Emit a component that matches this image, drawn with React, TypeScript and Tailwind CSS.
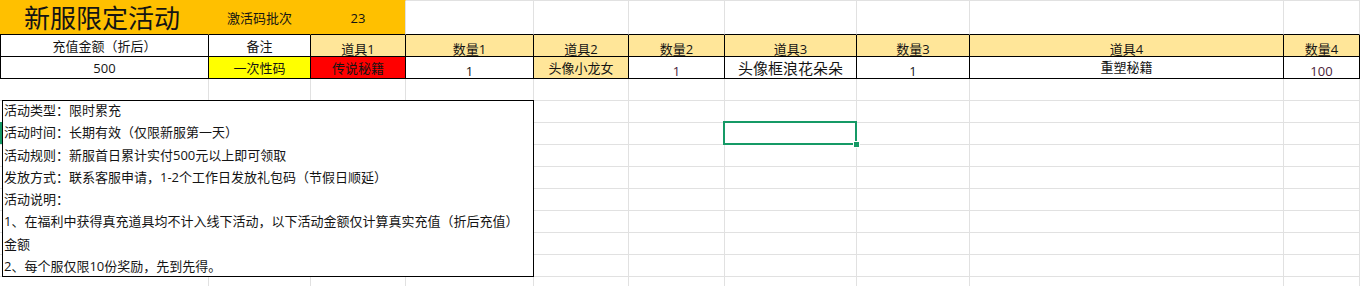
import * as React from "react"

// column widths, each including its 1px right gridline
const GRID =
  "grid grid-cols-[209px_102px_95px_128px_95px_96px_132px_113px_314px_76px_1fr] grid-rows-[35px_repeat(12,22px)]"

function Cell({ className = "", children }: { className?: string; children?: React.ReactNode }) {
  return (
    <div className={"flex justify-center whitespace-nowrap border-r border-b " + className}>
      {children}
    </div>
  )
}

const headers = ["道具1", "数量1", "道具2", "数量2", "道具3", "数量3", "道具4", "数量4"]

const notes = [
  "活动类型：限时累充",
  "活动时间：长期有效（仅限新服第一天）",
  "活动规则：新服首日累计实付500元以上即可领取",
  "发放方式：联系客服申请，1-2个工作日发放礼包码（节假日顺延）",
  "活动说明：",
  "1、在福利中获得真充道具均不计入线下活动，以下活动金额仅计算真实充值（折后充值）",
  "金额",
  "2、每个服仅限10份奖励，先到先得。",
]

export default function App() {
  return (
    <div className="relative h-[286px] w-[1360px] overflow-hidden bg-white font-['Open_Sans','Noto_Sans_CJK_SC',sans-serif] text-[13px] leading-[16px] text-[#141414]">
      <div className={GRID}>
        {/* row 1 */}
        <Cell className="items-end justify-start border-t border-[#ffc000] border-b-black bg-[#ffc000] pb-[1px] pl-[24px] text-[26px] leading-[30px]">
          新服限定活动
        </Cell>
        <Cell className="items-center border-t border-[#ffc000] border-b-black bg-[#ffc000] pt-[1px]">激活码批次</Cell>
        <Cell className="items-center border-t border-t-[#ffc000] border-[#e1e1e1] border-b-black bg-[#ffc000] pt-[1px]">23</Cell>
        {[0, 1, 2, 3, 4, 5, 6].map((i) => (
          <Cell key={i} className="border-t border-[#e1e1e1] border-b-black" />
        ))}
        <Cell className="border-t border-[#e1e1e1]" />

        {/* row 2 */}
        <Cell className="border-l border-black pt-[3px]">充值金额（折后）</Cell>
        <Cell className="border-black pt-[3px]">备注</Cell>
        {headers.map((h) => (
          <Cell key={h} className="border-black bg-[#ffe699] pt-[6px]">
            {h}
          </Cell>
        ))}
        <Cell className="border-[#e1e1e1]" />

        {/* row 3 */}
        <Cell className="border-l border-black pt-[3px]">500</Cell>
        <Cell className="border-black bg-[#ffff00] pt-[3px]">一次性码</Cell>
        <Cell className="border-black bg-[#ff0000] pt-[3px]">传说秘籍</Cell>
        <Cell className="border-black pt-[6px]">1</Cell>
        <Cell className="border-black bg-[#ffe699] pt-[3px]">头像小龙女</Cell>
        <Cell className="border-black pt-[6px] text-[#4a2238]">1</Cell>
        <Cell className="border-black pt-[3px] text-[15px]">头像框浪花朵朵</Cell>
        <Cell className="border-black pt-[6px]">1</Cell>
        <Cell className="border-black pt-[2px]">重塑秘籍</Cell>
        <Cell className="border-black pt-[6px] text-[#4a2238]">100</Cell>
        <Cell className="border-[#e1e1e1]" />

        {/* empty rows */}
        {Array.from({ length: 110 }).map((_, i) => (
          <Cell key={"e" + i} className="border-[#e1e1e1]" />
        ))}
      </div>

      {/* text box floating over the sheet */}
      <div className="absolute left-[2px] top-[100px] h-[177px] w-[532px] border border-black bg-white pl-px">
        <div className="-mt-[2px]">
          {notes.map((line, i) => (
            <div key={i} className="whitespace-nowrap leading-[22.3px]">
              {line}
            </div>
          ))}
        </div>
      </div>

      {/* row header mark */}
      <div className="absolute left-0 top-[122px] h-[22px] w-[2px] bg-[#159a66]" />

      {/* active cell */}
      <div className="absolute left-[723px] top-[121px] h-[24px] w-[134px] border-2 border-[#159a66]" />
      <div className="absolute left-[853px] top-[141px] h-[7px] w-[7px] border border-white bg-[#159a66]" />
    </div>
  )
}
